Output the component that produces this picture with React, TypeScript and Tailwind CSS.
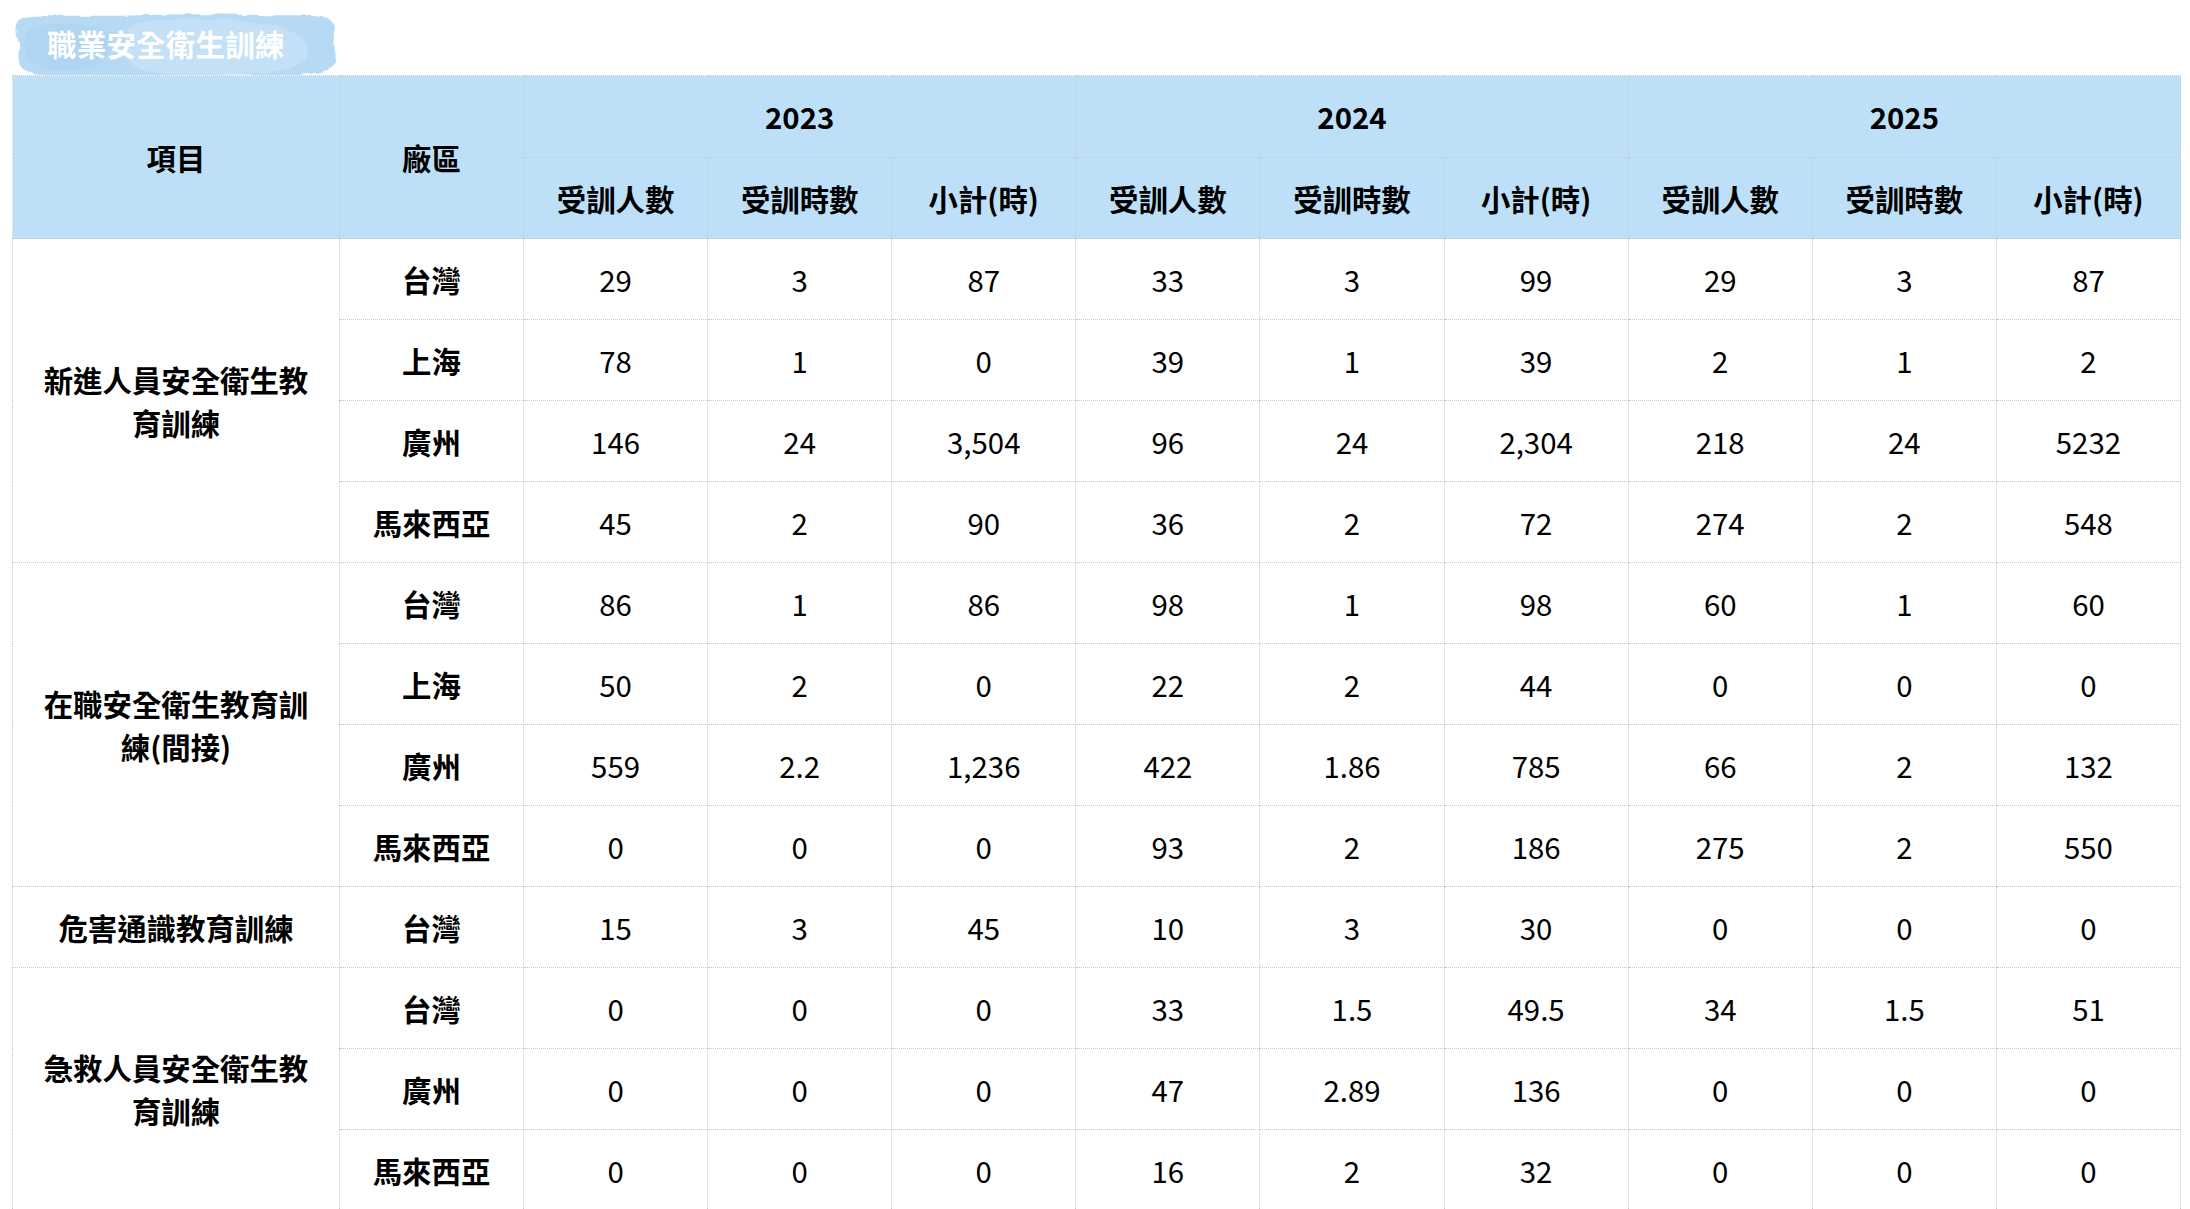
import React from 'react';

const years = ['2023', '2024', '2025'];
const subHeads = ['受訓人數', '受訓時數', '小計(時)'];

type Group = {
  item: string;
  rows: { site: string; values: string[] }[];
};

const groups: Group[] = [
  {
    item: '新進人員安全衛生教育訓練',
    rows: [
      { site: '台灣', values: ['29', '3', '87', '33', '3', '99', '29', '3', '87'] },
      { site: '上海', values: ['78', '1', '0', '39', '1', '39', '2', '1', '2'] },
      { site: '廣州', values: ['146', '24', '3,504', '96', '24', '2,304', '218', '24', '5232'] },
      { site: '馬來西亞', values: ['45', '2', '90', '36', '2', '72', '274', '2', '548'] },
    ],
  },
  {
    item: '在職安全衛生教育訓練(間接)',
    rows: [
      { site: '台灣', values: ['86', '1', '86', '98', '1', '98', '60', '1', '60'] },
      { site: '上海', values: ['50', '2', '0', '22', '2', '44', '0', '0', '0'] },
      { site: '廣州', values: ['559', '2.2', '1,236', '422', '1.86', '785', '66', '2', '132'] },
      { site: '馬來西亞', values: ['0', '0', '0', '93', '2', '186', '275', '2', '550'] },
    ],
  },
  {
    item: '危害通識教育訓練',
    rows: [{ site: '台灣', values: ['15', '3', '45', '10', '3', '30', '0', '0', '0'] }],
  },
  {
    item: '急救人員安全衛生教育訓練',
    rows: [
      { site: '台灣', values: ['0', '0', '0', '33', '1.5', '49.5', '34', '1.5', '51'] },
      { site: '廣州', values: ['0', '0', '0', '47', '2.89', '136', '0', '0', '0'] },
      { site: '馬來西亞', values: ['0', '0', '0', '16', '2', '32', '0', '0', '0'] },
    ],
  },
];

// watercolor blob behind the section title
const TitleBadge: React.FC<{ title: string }> = ({ title }) => (
  <div className="relative w-[328px] h-[63px] flex items-center">
    <svg className="absolute inset-0" width="328" height="63" viewBox="0 0 328 63">
      <defs>
        <filter id="wc" x="-5%" y="-10%" width="110%" height="120%">
          <feTurbulence type="fractalNoise" baseFrequency="0.035" numOctaves="3" seed="4" result="n" />
          <feDisplacementMap in="SourceGraphic" in2="n" scale="5" xChannelSelector="R" yChannelSelector="G" />
        </filter>
        <filter id="grain">
          <feTurbulence type="fractalNoise" baseFrequency="0.9" numOctaves="2" seed="2" />
          <feColorMatrix values="0 0 0 0 1  0 0 0 0 1  0 0 0 0 1  0 0 0 0.25 0" />
          <feComposite in2="SourceGraphic" operator="in" />
        </filter>
      </defs>
      <g filter="url(#wc)">
        <path
          d="M12 6 C40 2 90 5 130 3 C190 1 250 4 300 3 C318 4 324 12 322 22 C320 32 327 40 324 50 C322 60 300 64 260 63 C200 64 120 64 60 64 C30 64 12 63 8 54 C4 44 9 38 6 28 C3 16 4 8 12 6 Z"
          fill="#b4d8f3"
        />
        <path
          d="M120 14 C150 4 200 6 240 10 C280 14 302 28 294 46 C286 62 220 64 170 63 C130 62 110 52 112 36 C113 26 114 18 120 14 Z"
          fill="#c6e1f6"
          opacity="0.8"
        />
        <path
          d="M20 16 C40 10 70 12 90 16 C110 24 100 50 80 56 C60 60 28 58 16 48 C10 38 10 22 20 16 Z"
          fill="#a9d1f0"
          opacity="0.6"
        />
      </g>
      <rect x="4" y="0" width="322" height="63" fill="#ffffff" filter="url(#grain)" opacity="0.35" />
    </svg>
    <span className="relative pl-[35px] text-[29.5px] font-bold text-white leading-none tracking-[0.2px]">
      {title}
    </span>
  </div>
);

const cellBorder = 'border border-dotted border-[#c9c9c9]';

export default function App() {
  return (
    <div
      className="min-h-screen bg-white pl-[12px] pt-[12px]"
      style={{ fontFamily: '"Noto Sans CJK TC", "Noto Sans", sans-serif' }}
    >
      <TitleBadge title="職業安全衛生訓練" />
      <table className="table-fixed border-collapse w-[2169px] text-[29.4px] text-black">
        <colgroup>
          <col className="w-[327px]" />
          <col className="w-[184px]" />
          {Array.from({ length: 9 }).map((_, i) => (
            <col key={i} />
          ))}
        </colgroup>
        <thead className="bg-[#bde0f8] font-bold">
          <tr className="h-[82px]">
            <th rowSpan={2} className={`${cellBorder} font-bold`}>
              項目
            </th>
            <th rowSpan={2} className={`${cellBorder} font-bold`}>
              廠區
            </th>
            {years.map((y) => (
              <th key={y} colSpan={3} className={`${cellBorder} font-bold`}>
                {y}
              </th>
            ))}
          </tr>
          <tr className="h-[81px]">
            {years.map((y) =>
              subHeads.map((s) => (
                <th key={y + s} className={`${cellBorder} font-bold`}>
                  {s}
                </th>
              ))
            )}
          </tr>
        </thead>
        <tbody>
          {groups.map((g) =>
            g.rows.map((r, idx) => (
              <tr key={g.item + r.site} className="h-[81px]">
                {idx === 0 && (
                  <td rowSpan={g.rows.length} className={`${cellBorder} px-5 text-center font-bold leading-[43px]`}>
                    {g.item}
                  </td>
                )}
                <td className={`${cellBorder} text-center font-bold`}>{r.site}</td>
                {r.values.map((v, i) => (
                  <td key={i} className={`${cellBorder} text-center`}>
                    {v}
                  </td>
                ))}
              </tr>
            ))
          )}
        </tbody>
      </table>
    </div>
  );
}
